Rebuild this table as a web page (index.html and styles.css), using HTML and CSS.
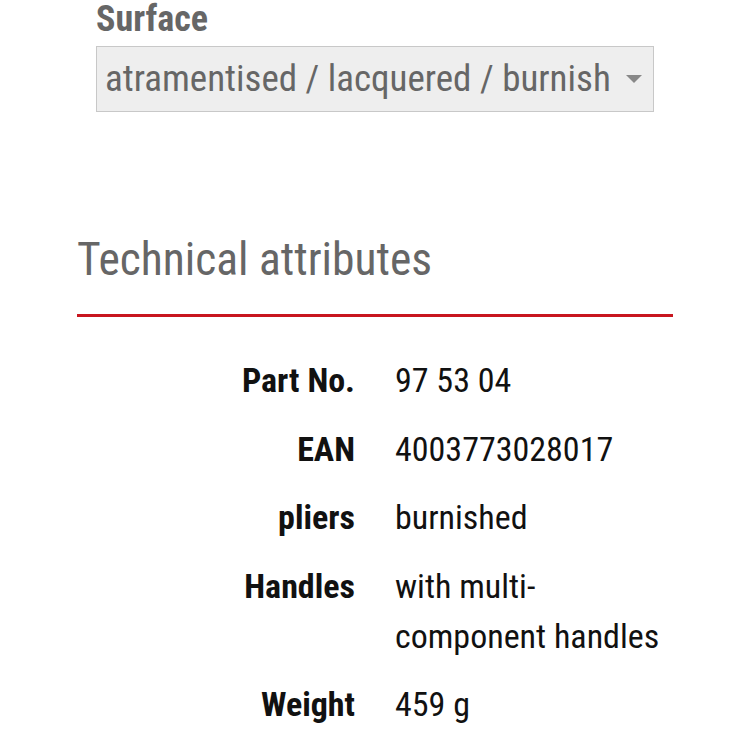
FILE: index.html
```html
<!DOCTYPE html>
<html lang="en">
<head>
<meta charset="utf-8">
<link rel="stylesheet" href="styles.css">
</head>
<body>
<div class="page">
  <div class="filter">
    <div class="filter-label">Surface</div>
    <div class="select">
      <span class="select-text">atramentised / lacquered / burnished</span>
      <span class="caret"></span>
    </div>
  </div>
  <section class="tech">
    <h2 class="tech-title">Technical attributes</h2>
    <div class="attrs">
      <div class="k">Part No.</div><div class="v">97 53 04</div>
      <div class="k">EAN</div><div class="v">4003773028017</div>
      <div class="k">pliers</div><div class="v">burnished</div>
      <div class="k">Handles</div><div class="v">with multi-<br>component handles</div>
      <div class="k">Weight</div><div class="v">459 g</div>
    </div>
  </section>
</div>
</body>
</html>
```
FILE: styles.css
```css
html, body { margin: 0; padding: 0; background: #fff; }
body { font-family: "Roboto", "Liberation Sans", sans-serif; }
.page { padding: 0 77px; }
.filter { padding: 0 19px; }
.filter-label {
  font-size: 36px; font-weight: 700; font-stretch: 75%; color: #666;
  line-height: 38px;
}
.select {
  margin-top: 8px; width: 558px; height: 66px; box-sizing: border-box;
  background: #eeeeee; border: 1px solid #c8c8c8;
  display: flex; align-items: center; padding: 0 11px 0 8px; overflow: hidden;
}
.select-text {
  flex: 1; min-width: 0; white-space: nowrap; overflow: hidden;
  font-size: 37px; font-stretch: 87.5%; color: #666; line-height: 44px;
}
.caret {
  flex: none; width: 0; height: 0; border-left: 8.5px solid transparent; border-right: 8.5px solid transparent;
  border-top: 8px solid #888; margin-left: 16px;
}
.tech { margin-top: 120px; }
.tech-title {
  margin: 0; font-size: 45.5px; font-weight: 400; font-stretch: 75%; color: #666;
  line-height: 56px; padding-bottom: 26px; border-bottom: 3px solid #c8161f;
}
.attrs {
  display: grid; grid-template-columns: 278px 1fr; column-gap: 40px;
  padding-top: 38px; font-size: 34px; font-stretch: 75%; line-height: 50px; color: #111;
}
.k { text-align: right; font-weight: 700; padding-bottom: 18.5px; }
.v { padding-bottom: 18.5px; }
```
